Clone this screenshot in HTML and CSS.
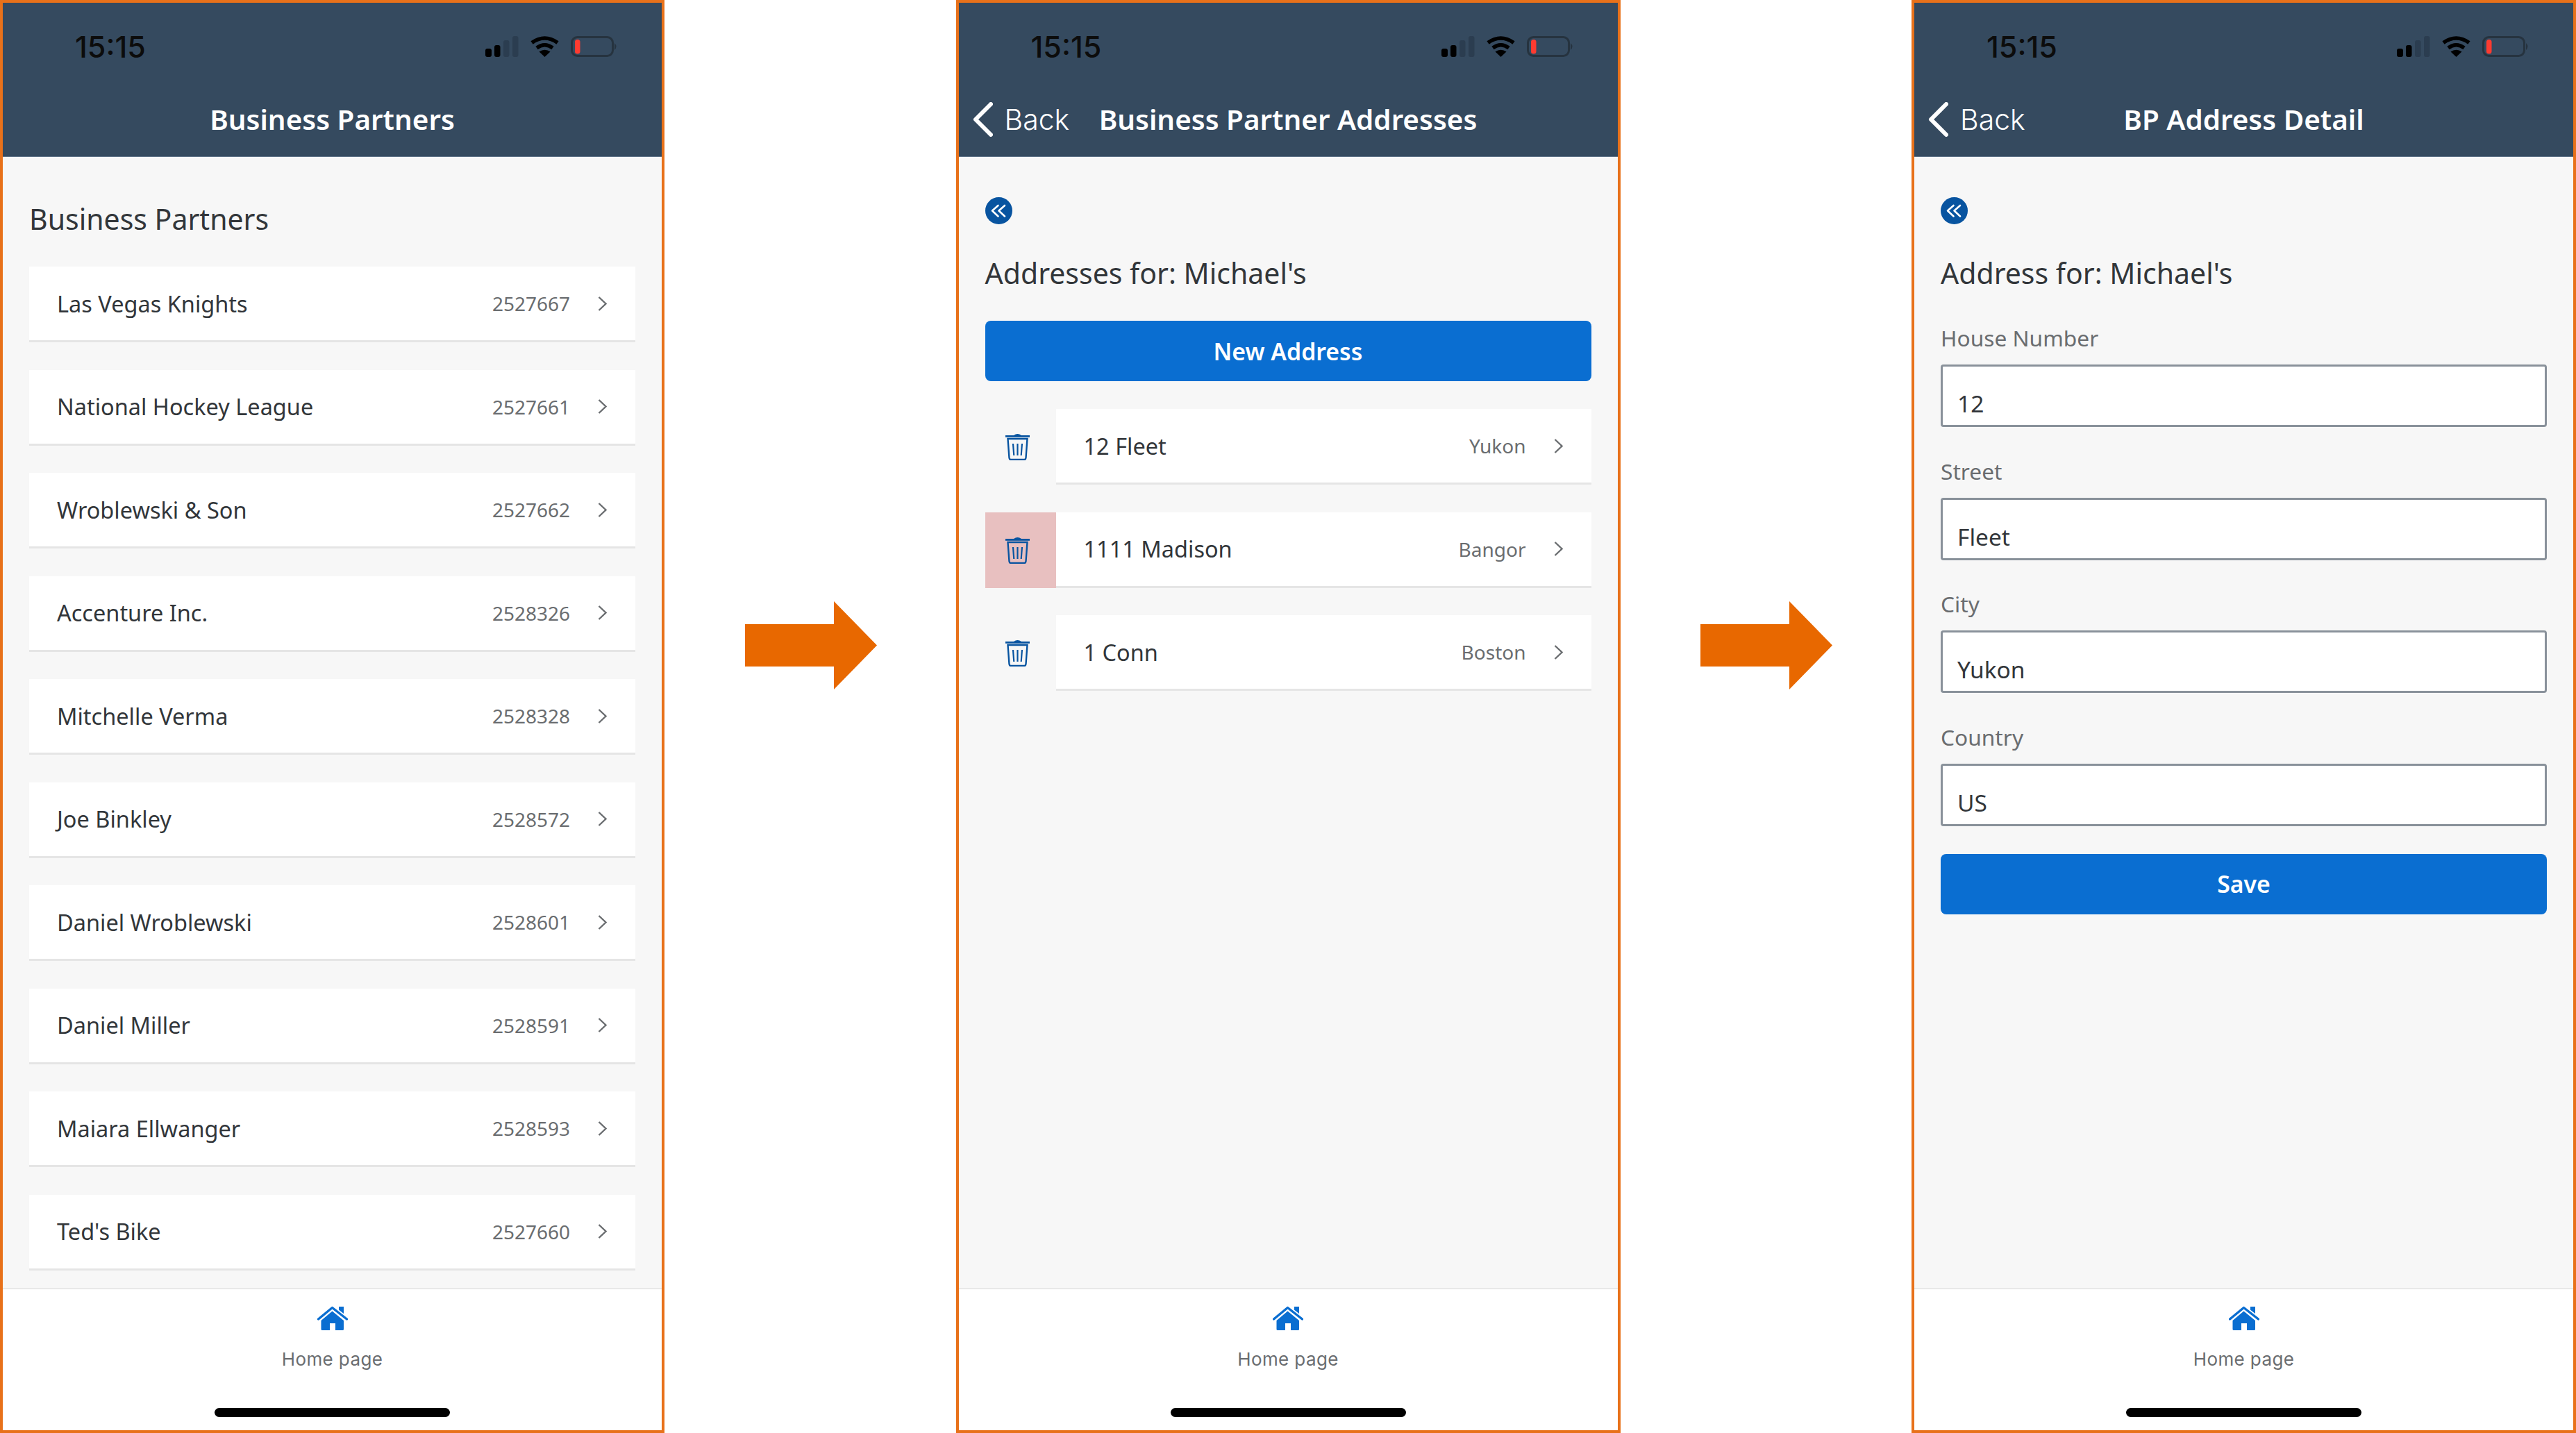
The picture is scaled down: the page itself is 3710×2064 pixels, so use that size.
FILE: index.html
```html
<!DOCTYPE html>
<html lang="en">
<head>
<meta charset="UTF-8">
<meta name="viewport" content="width=device-width, initial-scale=1.0">
<title>Business Partners flow</title>
<link rel="stylesheet" href="styles.css">
</head>
<body>
<svg class="sprite" xmlns="http://www.w3.org/2000/svg">
    <symbol id="status" viewBox="0 0 191 30">
        <rect x="0" y="18" width="9" height="12" rx="3" fill="#000"/>
        <rect x="13" y="13" width="8.5" height="17" rx="3" fill="#000"/>
        <rect x="26" y="6" width="8.5" height="24" rx="3" fill="#2b3d50"/>
        <rect x="39" y="0" width="8.5" height="30" rx="3" fill="#2b3d50"/>
        <path d="M67 9.5Q85.5 -3.5 104 9.5M74 17Q85.5 8.5 97 17" fill="none" stroke="#000" stroke-width="5.5"/>
        <path d="M85.5 30L77.5 22.5Q85.5 17 93.5 22.5Z" fill="#000"/>
        <rect x="124.5" y="1.5" width="59" height="27" rx="8" fill="none" stroke="#26333f" stroke-width="3"/>
        <rect x="129" y="5" width="7.5" height="20.5" rx="3.5" fill="#ff3b30"/>
        <path d="M186 10Q191 15 186 20Z" fill="#26333f"/>
    </symbol>
    <symbol id="chevron" viewBox="0 0 13 21">
        <path d="M1.5 1L11.5 10.5L1.5 20" fill="none" stroke="#6a6d70" stroke-width="2.4"/>
    </symbol>
    <symbol id="back" viewBox="0 0 29 50">
        <path d="M26 3L4 25L26 47" fill="none" stroke="#fff" stroke-width="6" stroke-linecap="round" stroke-linejoin="round"/>
    </symbol>
    <symbol id="double-back" viewBox="0 0 39 39">
        <circle cx="19.5" cy="19.5" r="19.5" fill="#0854a0"/>
        <path d="M18.5 12L10 19.5L18.5 27.5M28 12L19.5 19.5L28 27.5" fill="none" stroke="#fff" stroke-width="2.6" stroke-linecap="round" stroke-linejoin="round"/>
    </symbol>
    <symbol id="trash" viewBox="0 0 35 39">
        <path d="M12 3Q17.5 -1 23 3Z" fill="#0854a0"/>
        <rect x="0" y="3" width="35" height="2.8" fill="#0854a0"/>
        <path d="M3.5 8H31.5L29.5 35.5Q29.3 38 27 38H8Q5.7 38 5.5 35.5Z" fill="none" stroke="#0854a0" stroke-width="2.4"/>
        <path d="M11 15L12.3 32M17.5 15V32M24 15L22.7 32" fill="none" stroke="#0854a0" stroke-width="2.2"/>
    </symbol>
    <symbol id="home" viewBox="0 0 44 35">
        <rect x="31" y="1" width="7" height="12" fill="#0a6ed1"/>
        <path d="M2 19L21.5 3L42 19" fill="none" stroke="#fff" stroke-width="7.5"/>
        <path d="M1.5 19L21.5 2.5L42.5 19" fill="none" stroke="#0a6ed1" stroke-width="3.4" stroke-linecap="round" stroke-linejoin="round"/>
        <path fill-rule="evenodd" d="M21.5 7.5L38 21V33.5Q38 35 36.5 35H7Q5.5 35 5.5 33.5V21ZM18 25V35H26V25Z" fill="#0a6ed1"/>
    </symbol>
</svg>

<div class="phone">
    <header class="shell">
        <div class="status">
            <span class="time">15:15</span>
            <svg class="status-icons"><use href="#status"/></svg>
        </div>
        <div class="nav">
            <span></span>
            <h1>Business Partners</h1>
            <span></span>
        </div>
    </header>
    <main class="content">
        <h2 class="title-list">Business Partners</h2>
        <div class="list">
            <div class="row"><span class="name">Las Vegas Knights</span><span class="meta">2527667</span><svg class="chevron"><use href="#chevron"/></svg></div>
            <div class="row"><span class="name">National Hockey League</span><span class="meta">2527661</span><svg class="chevron"><use href="#chevron"/></svg></div>
            <div class="row"><span class="name">Wroblewski &amp; Son</span><span class="meta">2527662</span><svg class="chevron"><use href="#chevron"/></svg></div>
            <div class="row"><span class="name">Accenture Inc.</span><span class="meta">2528326</span><svg class="chevron"><use href="#chevron"/></svg></div>
            <div class="row"><span class="name">Mitchelle Verma</span><span class="meta">2528328</span><svg class="chevron"><use href="#chevron"/></svg></div>
            <div class="row"><span class="name">Joe Binkley</span><span class="meta">2528572</span><svg class="chevron"><use href="#chevron"/></svg></div>
            <div class="row"><span class="name">Daniel Wroblewski</span><span class="meta">2528601</span><svg class="chevron"><use href="#chevron"/></svg></div>
            <div class="row"><span class="name">Daniel Miller</span><span class="meta">2528591</span><svg class="chevron"><use href="#chevron"/></svg></div>
            <div class="row"><span class="name">Maiara Ellwanger</span><span class="meta">2528593</span><svg class="chevron"><use href="#chevron"/></svg></div>
            <div class="row"><span class="name">Ted's Bike</span><span class="meta">2527660</span><svg class="chevron"><use href="#chevron"/></svg></div>
        </div>
    </main>
    <footer class="tabbar">
        <svg class="home-icon"><use href="#home"/></svg>
        <span class="tab-label">Home page</span>
        <div class="home-bar"></div>
    </footer>
</div>

<div class="connector">
    <svg class="arrow" viewBox="0 0 190 127"><path d="M0 33H128V0L190 63.5L128 127V94H0Z" fill="#e86800"/></svg>
</div>

<div class="phone">
    <header class="shell">
        <div class="status">
            <span class="time">15:15</span>
            <svg class="status-icons"><use href="#status"/></svg>
        </div>
        <div class="nav">
            <span class="back"><svg class="back-icon"><use href="#back"/></svg>Back</span>
            <h1>Business Partner Addresses</h1>
            <span></span>
        </div>
    </header>
    <main class="content">
        <svg class="double-back"><use href="#double-back"/></svg>
        <h2 class="title">Addresses for: Michael's</h2>
        <button class="primary">New Address</button>
        <div class="list address-list">
            <div class="address">
                <div class="delete"><svg class="trash"><use href="#trash"/></svg></div>
                <div class="row"><span class="name">12 Fleet</span><span class="meta">Yukon</span><svg class="chevron"><use href="#chevron"/></svg></div>
            </div>
            <div class="address">
                <div class="delete delete-active"><svg class="trash"><use href="#trash"/></svg></div>
                <div class="row"><span class="name">1111 Madison</span><span class="meta">Bangor</span><svg class="chevron"><use href="#chevron"/></svg></div>
            </div>
            <div class="address">
                <div class="delete"><svg class="trash"><use href="#trash"/></svg></div>
                <div class="row"><span class="name">1 Conn</span><span class="meta">Boston</span><svg class="chevron"><use href="#chevron"/></svg></div>
            </div>
        </div>
    </main>
    <footer class="tabbar">
        <svg class="home-icon"><use href="#home"/></svg>
        <span class="tab-label">Home page</span>
        <div class="home-bar"></div>
    </footer>
</div>

<div class="connector">
    <svg class="arrow" viewBox="0 0 190 127"><path d="M0 33H128V0L190 63.5L128 127V94H0Z" fill="#e86800"/></svg>
</div>

<div class="phone">
    <header class="shell">
        <div class="status">
            <span class="time">15:15</span>
            <svg class="status-icons"><use href="#status"/></svg>
        </div>
        <div class="nav">
            <span class="back"><svg class="back-icon"><use href="#back"/></svg>Back</span>
            <h1>BP Address Detail</h1>
            <span></span>
        </div>
    </header>
    <main class="content">
        <svg class="double-back"><use href="#double-back"/></svg>
        <h2 class="title">Address for: Michael's</h2>
        <div class="form">
            <div class="field"><label>House Number</label><div class="input">12</div></div>
            <div class="field"><label>Street</label><div class="input">Fleet</div></div>
            <div class="field"><label>City</label><div class="input">Yukon</div></div>
            <div class="field"><label>Country</label><div class="input">US</div></div>
        </div>
        <button class="primary save">Save</button>
    </main>
    <footer class="tabbar">
        <svg class="home-icon"><use href="#home"/></svg>
        <span class="tab-label">Home page</span>
        <div class="home-bar"></div>
    </footer>
</div>
</body>
</html>
```

FILE: styles.css
```css
body {
    font-family: 'Noto Sans', sans-serif;
    background-color: white;
    color: #32363a;
    margin: 0;
    display: flex;
    width: 3710px;
    height: 2064px;
    overflow: hidden;
}
.sprite {
    display: none;
}
.phone {
    box-sizing: border-box;
    width: 957px;
    height: 2064px;
    flex-shrink: 0;
    border: 4px solid #e8711a;
    display: flex;
    flex-direction: column;
}
.connector {
    flex: 1;
    display: flex;
    justify-content: center;
    padding-top: 866px;
}
.arrow {
    width: 190px;
    height: 127px;
    margin-left: 2px;
}

/* shell bar */
.shell {
    box-sizing: border-box;
    height: 222px;
    padding-top: 44px;
    background-color: #354a5f;
    border-bottom: 1px solid #5b6f84;
}
.status {
    height: 38px;
    display: flex;
    justify-content: space-between;
    align-items: center;
    padding: 0 63px 0 104px;
}
.time {
    font-family: 'Inter', sans-serif;
    font-size: 43px;
    font-weight: 500;
    color: #0c0c0c;
}
.status-icons {
    width: 191px;
    height: 30px;
}
.nav {
    height: 56px;
    margin-top: 58px;
    display: grid;
    grid-template-columns: 1fr auto 1fr;
    align-items: center;
    padding-left: 20px;
    padding-right: 20px;
    color: white;
}
.nav h1 {
    margin: 0;
    font-size: 40.4px;
    font-weight: 600;
    line-height: 56px;
}
.back {
    display: flex;
    align-items: center;
    gap: 17px;
    font-family: 'Inter', sans-serif;
    font-size: 41px;
    font-weight: 300;
}
.back-icon {
    width: 29px;
    height: 50px;
}

/* content */
.content {
    flex: 1;
    background-color: #f7f7f7;
    padding: 58px 38px 0;
}
.title-list {
    margin: 6px 0 44px;
    font-size: 41px;
    font-weight: 400;
    line-height: 50px;
}
.title {
    margin: 45px 0 0;
    font-size: 41px;
    font-weight: 400;
    line-height: 50px;
}
.double-back {
    display: block;
    width: 39px;
    height: 39px;
}
.primary {
    display: block;
    width: 100%;
    height: 87px;
    margin-top: 44px;
    padding: 0;
    border: none;
    border-radius: 8px;
    background-color: #0a6ed1;
    color: white;
    font-family: inherit;
    font-size: 33.8px;
    font-weight: 600;
}
.save {
    margin-top: 40px;
}

/* lists */
.list {
    display: flex;
    flex-direction: column;
    gap: 39.5px;
}
.row {
    box-sizing: border-box;
    height: 109px;
    flex-shrink: 0;
    display: flex;
    align-items: center;
    padding: 0 41px 0 40px;
    background-color: white;
    border-bottom: 3px solid #e5e5e5;
}
.name {
    flex: 1;
    font-size: 32.5px;
}
.meta {
    font-size: 28px;
    color: #6a6d70;
}
.chevron {
    width: 13px;
    height: 21px;
    margin-left: 40px;
}
.address-list {
    margin-top: 40px;
}
.address {
    display: flex;
    height: 109px;
}
.address .row {
    flex: 1;
}
.delete {
    width: 102px;
    padding-left: 29px;
    box-sizing: border-box;
    display: flex;
    align-items: center;
}
.delete-active {
    background-color: #e8c0c0;
}
.trash {
    width: 35px;
    height: 39px;
}

/* form */
.form {
    margin-top: 49px;
    display: flex;
    flex-direction: column;
    gap: 43.5px;
}
.field label {
    display: block;
    font-size: 31.7px;
    line-height: 40px;
    color: #6a6d70;
}
.input {
    box-sizing: border-box;
    height: 90px;
    margin-top: 18px;
    padding: 22px 0 0 21px;
    display: flex;
    align-items: center;
    background-color: white;
    border: 3px solid #89919a;
    border-radius: 4px;
    font-size: 33.5px;
}

/* tab bar */
.tabbar {
    box-sizing: border-box;
    height: 205px;
    padding-top: 24px;
    display: flex;
    flex-direction: column;
    align-items: center;
    background-color: white;
    border-top: 2px solid #e8e8e8;
}
.home-icon {
    width: 44px;
    height: 35px;
}
.tab-label {
    margin-top: 24px;
    font-family: 'Inter', sans-serif;
    font-size: 26px;
    letter-spacing: 0.4px;
    line-height: 36px;
    color: #6a6d70;
}
.home-bar {
    width: 339px;
    height: 13px;
    margin-top: 52px;
    border-radius: 7px;
    background-color: black;
}
```
